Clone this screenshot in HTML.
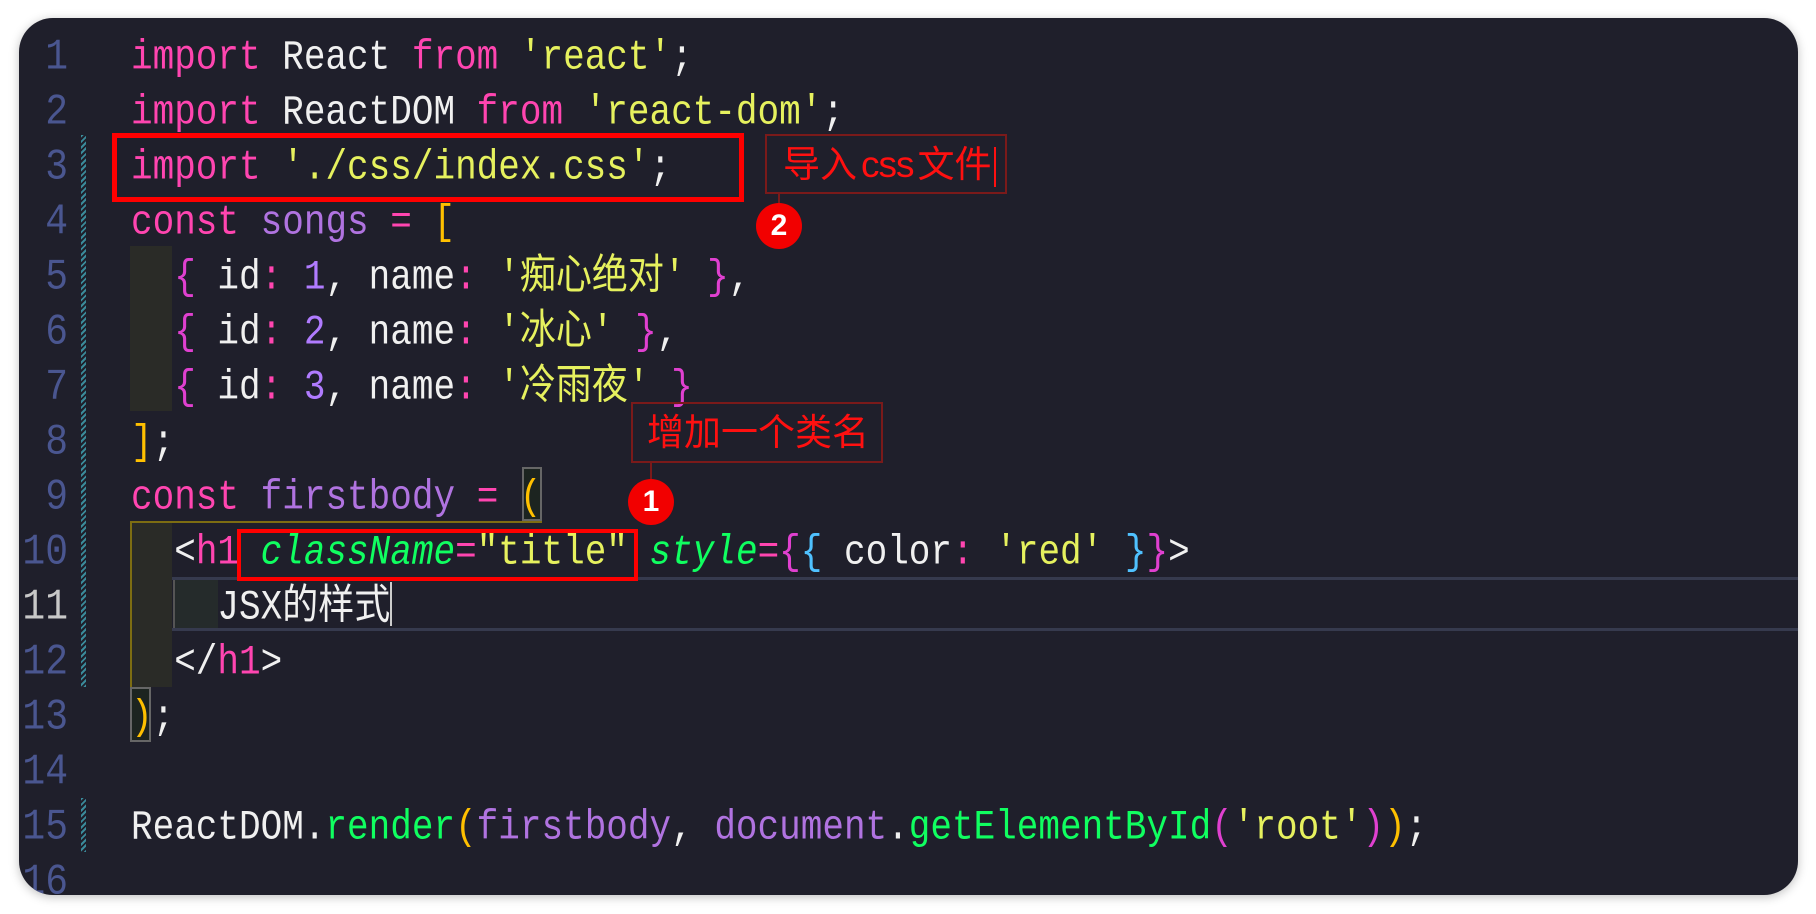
<!DOCTYPE html>
<html><head><meta charset="utf-8">
<style>
html,body{margin:0;padding:0;background:#fff;width:1816px;height:914px;overflow:hidden}
#p{position:absolute;left:19px;top:18px;width:1779px;height:877px;background:#1f1f2b;border-radius:34px;box-shadow:0 2px 10px rgba(0,0,0,.25);overflow:hidden}
.a{position:absolute}
.ln{position:absolute;left:0;width:49px;text-align:right;font:38px/55px "Liberation Mono",monospace;color:#4a5690;transform:scaleY(1.15);margin-top:5px}
.l{position:absolute;left:112px;white-space:pre;font:36px/55px "Liberation Mono","Noto Sans CJK SC",monospace;color:#f0f0f0;transform:scaleY(1.15);margin-top:5px}
.k{color:#ff45b0}.s{color:#e6f15e}.v{color:#b073e0}.n{color:#b07bff}.g{color:#10ff60}.b{color:#e040d0}.o{color:#ffc000}.c{color:#4fc1ff}.p{color:#ff45b0}
.gi{font-style:italic}
.note{position:absolute;border:2px solid #7a1a1a;color:#ff1010;font:37px/58px "Liberation Sans","Noto Sans CJK SC",sans-serif;white-space:nowrap;box-sizing:border-box}
.dot{position:absolute;width:46px;height:46px;border-radius:50%;background:#f20000;color:#fff;font:bold 30px/46px "Liberation Sans",sans-serif;text-align:center}
.gut{position:absolute;left:62px;width:5px;background:repeating-linear-gradient(135deg,#3a8a9a 0 2px,transparent 2px 4px)}
</style></head><body>
<div id="p">
<div class="a" style="left:111px;top:559px;width:1700px;height:3px;background:#363a4e"></div>
<div class="a" style="left:111px;top:610px;width:1700px;height:3px;background:#363a4e"></div>
<div class="a" style="left:111px;top:228px;width:42px;height:165px;background:#2a2b27"></div>
<div class="a" style="left:111px;top:503px;width:42px;height:166px;background:#2a2b27;border-left:2px solid #7d6d12;box-sizing:border-box"></div>
<div class="a" style="left:111px;top:503px;width:412px;height:2px;background:#7d6d12"></div>
<div class="a" style="left:154px;top:562px;width:43px;height:48px;background:#252b2b;border-left:2px solid #555"></div>
<div class="a" style="left:503px;top:449px;width:20px;height:54px;border:2px solid #666;box-sizing:border-box;background:#1c2420"></div>
<div class="a" style="left:111px;top:669px;width:21px;height:55px;border:2px solid #666;box-sizing:border-box;background:#1c2420"></div>
<div class="gut" style="top:117px;height:552px"></div>
<div class="gut" style="top:780px;height:54px"></div>

<div class="ln" style="top:7px">1</div>
<div class="ln" style="top:62px">2</div>
<div class="ln" style="top:117px">3</div>
<div class="ln" style="top:172px">4</div>
<div class="ln" style="top:227px">5</div>
<div class="ln" style="top:282px">6</div>
<div class="ln" style="top:337px">7</div>
<div class="ln" style="top:392px">8</div>
<div class="ln" style="top:447px">9</div>
<div class="ln" style="top:502px">10</div>
<div class="ln" style="top:557px;color:#c8c8c8">11</div>
<div class="ln" style="top:612px">12</div>
<div class="ln" style="top:667px">13</div>
<div class="ln" style="top:722px">14</div>
<div class="ln" style="top:777px">15</div>
<div class="ln" style="top:832px">16</div>

<div class="l" style="top:7px"><span class="k">import</span> React <span class="k">from</span> <span class="s">'react'</span>;</div>
<div class="l" style="top:62px"><span class="k">import</span> ReactDOM <span class="k">from</span> <span class="s">'react-dom'</span>;</div>
<div class="l" style="top:117px"><span class="k">import</span> <span class="s">'./css/index.css'</span>;</div>
<div class="l" style="top:172px"><span class="k">const</span> <span class="v">songs</span> <span class="p">=</span> <span class="o">[</span></div>
<div class="l" style="top:227px">  <span class="b">{</span> id<span class="p">:</span> <span class="n">1</span>, name<span class="p">:</span> <span class="s">'痴心绝对'</span> <span class="b">}</span>,</div>
<div class="l" style="top:282px">  <span class="b">{</span> id<span class="p">:</span> <span class="n">2</span>, name<span class="p">:</span> <span class="s">'冰心'</span> <span class="b">}</span>,</div>
<div class="l" style="top:337px">  <span class="b">{</span> id<span class="p">:</span> <span class="n">3</span>, name<span class="p">:</span> <span class="s">'冷雨夜'</span> <span class="b">}</span></div>
<div class="l" style="top:392px"><span class="o">]</span>;</div>
<div class="l" style="top:447px"><span class="k">const</span> <span class="v">firstbody</span> <span class="p">=</span> <span class="o">(</span></div>
<div class="l" style="top:502px">  &lt;<span class="k">h1</span> <span class="g gi">className</span><span class="p">=</span><span class="s">"title"</span> <span class="g gi">style</span><span class="p">=</span><span class="b">{</span><span class="c">{</span> color<span class="p">:</span> <span class="s">'red'</span> <span class="c">}</span><span class="b">}</span>&gt;</div>
<div class="l" style="top:557px">    JSX的样式</div>
<div class="a" style="left:371px;top:564px;width:2px;height:44px;background:#ccc"></div>
<div class="l" style="top:612px">  &lt;/<span class="k">h1</span>&gt;</div>
<div class="l" style="top:667px"><span class="o">)</span>;</div>
<div class="l" style="top:777px">ReactDOM.<span class="g">render</span><span class="o">(</span><span class="v">firstbody</span>, <span class="v">document</span>.<span class="g">getElementById</span><span class="b">(</span><span class="s">'root'</span><span class="b">)</span><span class="o">)</span>;</div>

<div class="a" style="left:93px;top:115px;width:632px;height:69px;border:5px solid #ff0000;box-sizing:border-box"></div>
<div class="a" style="left:218px;top:511px;width:401px;height:52px;border:4px solid #ff0000;box-sizing:border-box"></div>

<div class="note" style="left:746px;top:116px;width:242px;height:60px;padding-left:16px">导入<span style="margin:0 4px;letter-spacing:-1px">css</span>文件<span style="display:inline-block;width:2px;height:40px;background:#ff1010;vertical-align:middle;margin-left:2px"></span></div>
<div class="a" style="left:759px;top:176px;width:2px;height:10px;background:#7a1a1a"></div>
<div class="dot" style="left:737px;top:185px">2</div>
<div class="note" style="left:612px;top:384px;width:252px;height:61px;padding-left:14px">增加一个类名</div>
<div class="a" style="left:631px;top:445px;width:2px;height:16px;background:#7a1a1a"></div>
<div class="dot" style="left:609px;top:461px">1</div>
</div>
</body></html>
